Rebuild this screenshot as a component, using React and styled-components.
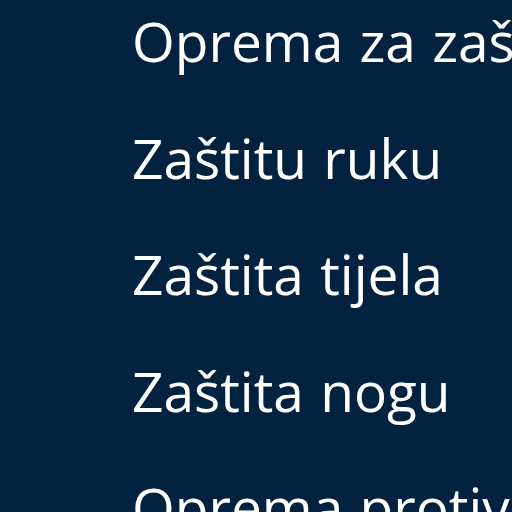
import React from 'react';
import styled, { createGlobalStyle } from 'styled-components';

const GlobalStyle = createGlobalStyle`
  html, body {
    margin: 0;
    padding: 0;
    background: #03223f;
  }
`;

const Menu = styled.ul`
  list-style: none;
  margin: 0;
  padding: 9px 0 0 132px;
  width: 512px;
  height: 512px;
  box-sizing: border-box;
  overflow: hidden;
  background: #03223f;
  display: flex;
  flex-direction: column;
  gap: 52.5px;
`;

const Item = styled.li`
  font-family: 'Open Sans', sans-serif;
  font-size: 55px;
  line-height: 64px;
  font-weight: 400;
  word-spacing: 2px;
  color: #ffffff;
  white-space: nowrap;
`;

const items = [
  'Oprema za zaštitu glave',
  'Zaštitu ruku',
  'Zaštita tijela',
  'Zaštita nogu',
  'Oprema protiv pada',
];

const App = () => (
  <>
    <GlobalStyle />
    <Menu>
      {items.map((label) => (
        <Item key={label}>{label}</Item>
      ))}
    </Menu>
  </>
);

export default App;
